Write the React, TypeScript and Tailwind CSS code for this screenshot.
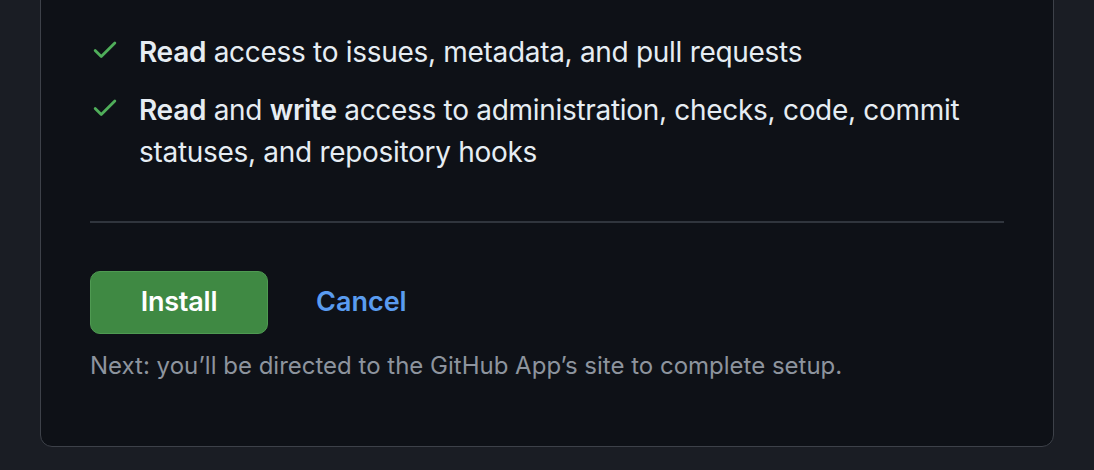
function Check() {
  return (
    <svg viewBox="0 0 16 16" width="30" height="30" className="mt-[3px] shrink-0 fill-[#4fae5a]">
      <path d="M13.78 4.22a.75.75 0 0 1 0 1.06l-7.25 7.25a.75.75 0 0 1-1.06 0L2.22 9.28a.751.751 0 0 1 .018-1.042.751.751 0 0 1 1.042-.018L6 10.94l6.72-6.72a.75.75 0 0 1 1.06 0Z" />
    </svg>
  )
}

export default function App() {
  return (
    <div className="min-h-[470px] bg-[#1a1d24] px-10 pb-[23px] font-['Inter',sans-serif] overflow-hidden">
      <div className="-mt-[10px] rounded-b-xl border border-[#3d4149] bg-[#0e1117] px-[49px] pt-[40px] pb-[64px]">
        <ul className="flex flex-col gap-4 text-[28px] leading-[42px] tracking-[-0.3px] text-[#e6edf3]">
          <li className="flex items-start gap-[19px]">
            <Check />
            <span>
              <strong className="font-semibold">Read</strong> access to issues, metadata, and pull requests
            </span>
          </li>
          <li className="flex items-start gap-[19px]">
            <Check />
            <span>
              <strong className="font-semibold">Read</strong> and <strong className="font-semibold">write</strong> access to administration, checks, code, commit statuses, and repository hooks
            </span>
          </li>
        </ul>

        <hr className="mt-[48px] border-0 border-t-2 border-[#30353d]" />

        <div className="mt-[48px] flex items-center gap-[48px]">
          <button className="h-[63px] w-[178px] rounded-[10px] border border-[#4f9a52] bg-[#3f8943] text-[27px] font-semibold tracking-[-0.2px] text-white">
            Install
          </button>
          <a href="#" className="text-[27px] font-semibold text-[#5a9cf0]">
            Cancel
          </a>
        </div>

        <p className="mt-4 text-[24px] leading-[32px] text-[#8d949e]">
          Next: you’ll be directed to the GitHub App’s site to complete setup.
        </p>
      </div>
    </div>
  )
}
